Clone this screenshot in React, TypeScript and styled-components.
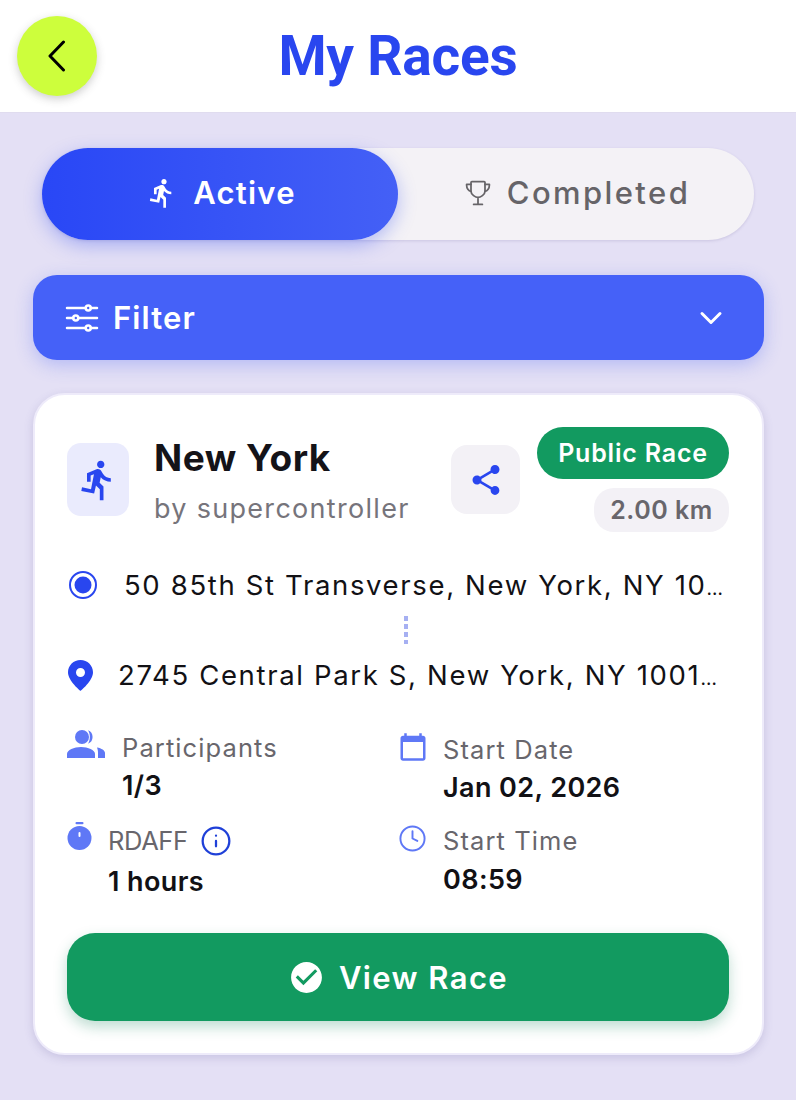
import React from "react";
import styled, { createGlobalStyle } from "styled-components";
import { MdDirectionsRun, MdShare, MdCalendarToday, MdCheckCircle } from "react-icons/md";
import { IoChevronDown, IoOptionsOutline, IoTrophyOutline } from "react-icons/io5";
import { Clock, Info } from "lucide-react";

const Global = createGlobalStyle`
  html, body { margin: 0; padding: 0; background: #e4e0f5; }
  body { font-family: "Inter", "Open Sans", sans-serif; width: 796px; height: 1100px; overflow: hidden; }
  * { box-sizing: border-box; }
`;

const Page = styled.div`
  width: 796px;
  height: 1100px;
  background: #e4e0f5;
  display: flex;
  flex-direction: column;
`;

const Header = styled.header`
  height: 113px;
  background: #fff;
  display: grid;
  grid-template-columns: 1fr auto 1fr;
  align-items: center;
  padding: 0 17px;
  border-bottom: 1px solid #e0dcef;
`;

const BackButton = styled.button`
  width: 80px;
  height: 80px;
  border: 0;
  border-radius: 50%;
  background: #cdfe3c;
  box-shadow: 0 3px 8px rgba(60, 60, 60, 0.25);
  display: flex;
  align-items: center;
  justify-content: center;
  color: #000;
  padding: 0;
  margin-top: -1px;
`;

const Title = styled.h1`
  margin: 0;
  font-family: "Roboto", sans-serif;
  font-weight: 700;
  font-size: 55px;
  line-height: 60px;
  color: #2946ef;
  letter-spacing: -0.2px;
`;

const Content = styled.main`
  padding: 35px 32px 0 33px;
  display: flex;
  flex-direction: column;
`;

const Toggle = styled.div`
  margin: 0 10px 0 9px;
  height: 92px;
  border-radius: 46px;
  background: #f4f2f6;
  box-shadow: 0 1px 3px rgba(90, 80, 140, 0.18);
  display: grid;
  grid-template-columns: 356px 1fr;
`;

const ToggleTab = styled.div<{ $active?: boolean }>`
  border-radius: 46px;
  display: flex;
  align-items: center;
  justify-content: center;
  gap: 15px;
  font-size: 31px;
  font-weight: ${(p) => (p.$active ? 600 : 500)};
  letter-spacing: ${(p) => (p.$active ? "1.2px" : "2.4px")};
  color: ${(p) => (p.$active ? "#fff" : "#666468")};
  background: ${(p) => (p.$active ? "linear-gradient(90deg, #2947f6, #4460f6)" : "transparent")};
  box-shadow: ${(p) => (p.$active ? "0 6px 18px rgba(60, 85, 240, 0.35)" : "none")};
  padding: 0 0 3px 2px;
`;

const FilterBar = styled.div`
  margin-top: 35px;
  height: 85px;
  border-radius: 24px;
  background: #4561f8;
  box-shadow: 0 5px 18px rgba(70, 95, 245, 0.3);
  display: flex;
  align-items: center;
  padding: 0 37px 0 29px;
  color: #fff;
  font-size: 31px;
  font-weight: 600;
  letter-spacing: 1.1px;
`;

const FilterLabel = styled.span`
  margin-left: 11px;
  flex: 1;
`;

const Card = styled.section`
  margin-top: 33px;
  height: 662px;
  background: #fff;
  border-radius: 32px;
  border: 2px solid #eeebfa;
  box-shadow: 0 3px 10px rgba(90, 80, 150, 0.2);
  padding: 32px 33px 0 32px;
  display: flex;
  flex-direction: column;
`;

const CardHead = styled.div`
  display: flex;
  align-items: flex-start;
`;

const SportIcon = styled.div`
  width: 62px;
  height: 73px;
  margin-top: 16px;
  border-radius: 14px;
  background: #eaebfd;
  color: #2946ef;
  font-size: 44px;
  display: flex;
  align-items: center;
  justify-content: center;
  flex: none;
`;

const Titles = styled.div`
  margin-left: 25px;
  flex: 1;
  padding-top: 7px;
`;

const RaceName = styled.div`
  font-size: 37px;
  line-height: 48px;
  font-weight: 700;
  color: #141318;
  letter-spacing: 0.5px;
`;

const RaceOwner = styled.div`
  margin-top: 10px;
  font-size: 27px;
  line-height: 34px;
  color: #76747b;
  letter-spacing: 1.3px;
  white-space: nowrap;
`;

const ShareButton = styled.div`
  width: 69px;
  height: 69px;
  margin-top: 18px;
  margin-right: 17px;
  border-radius: 16px;
  background: #f3f1f6;
  color: #2946ef;
  font-size: 36px;
  display: flex;
  align-items: center;
  justify-content: center;
  flex: none;
`;

const Badges = styled.div`
  display: flex;
  flex-direction: column;
  align-items: flex-end;
  gap: 9px;
  flex: none;
`;

const PublicBadge = styled.div`
  width: 192px;
  height: 52px;
  border-radius: 26px;
  background: #129a60;
  color: #fff;
  font-size: 25px;
  font-weight: 600;
  letter-spacing: 0.8px;
  display: flex;
  align-items: center;
  justify-content: center;
`;

const DistanceBadge = styled.div`
  width: 135px;
  height: 44px;
  border-radius: 20px;
  background: #f3f1f6;
  color: #68666c;
  font-size: 25px;
  font-weight: 600;
  letter-spacing: 0.5px;
  display: flex;
  align-items: center;
  justify-content: center;
`;

const AddressBlock = styled.div`
  margin-top: 33px;
  display: flex;
  flex-direction: column;
`;

const AddressRow = styled.div`
  display: flex;
  align-items: center;
  height: 40px;
  color: #2946ef;
`;

const AddressIconSlot = styled.div<{ $w: number; $pad: number }>`
  width: ${(p) => p.$w}px;
  padding-left: ${(p) => p.$pad}px;
  flex: none;
  display: flex;
  align-items: center;
  svg { display: block; }
`;

const AddressText = styled.div`
  font-size: 27.5px;
  line-height: 40px;
  color: #121115;
  letter-spacing: 1.65px;
  white-space: nowrap;
`;

const Ellipsis = styled.span`
  font-size: 19px;
  line-height: 0;
  letter-spacing: 0;
`;

const Dots = styled.div`
  height: 50px;
  display: flex;
  align-items: center;
  padding-left: 337px;
`;

const DotLine = styled.div`
  width: 4px;
  height: 28px;
  background: repeating-linear-gradient(to bottom, #a6b0f2 0 5px, transparent 5px 8px);
`;

const StatsGrid = styled.div`
  margin-top: 36px;
  display: grid;
  grid-template-columns: 333px 1fr;
  row-gap: 18px;
`;

const Stat = styled.div<{ $offset?: number }>`
  display: flex;
  align-items: flex-start;
  padding-top: ${(p) => p.$offset ?? 0}px;
`;

const StatIcon = styled.div<{ $w: number; $top: number; $left?: number }>`
  width: ${(p) => p.$w}px;
  flex: none;
  margin-top: ${(p) => p.$top}px;
  margin-left: ${(p) => p.$left ?? 0}px;
  color: #5f78f6;
  display: flex;
  svg { display: block; }
`;

const StatBody = styled.div<{ $gap: number }>`
  display: flex;
  flex-direction: column;
  gap: ${(p) => p.$gap}px;
`;

const StatLabelRow = styled.div`
  display: flex;
  align-items: center;
  gap: 12px;
  height: 34px;
`;

const StatLabel = styled.div<{ $tight?: boolean }>`
  font-size: 25.5px;
  line-height: 34px;
  color: #68666c;
  letter-spacing: ${(p) => (p.$tight ? "-0.4px" : "1.1px")};
`;

const StatValue = styled.div`
  font-size: 27px;
  line-height: 36px;
  font-weight: 600;
  color: #121115;
  letter-spacing: 0.4px;
`;

const InfoIcon = styled.span`
  color: #1f40d8;
  display: flex;
`;

const ViewButton = styled.button`
  margin-top: 33px;
  height: 88px;
  border: 0;
  border-radius: 28px;
  background: #129a60;
  box-shadow: 0 6px 14px rgba(20, 130, 90, 0.28);
  color: #fff;
  font-family: inherit;
  font-size: 31px;
  font-weight: 600;
  letter-spacing: 1.4px;
  display: flex;
  align-items: center;
  justify-content: center;
  gap: 14px;
`;

const ViewIcon = styled.span`
  font-size: 37px;
  display: flex;
`;

const ChevronLeft = () => (
  <svg width="20" height="32" viewBox="0 0 20 32" fill="none" stroke="currentColor" strokeWidth="3" strokeLinecap="round" strokeLinejoin="round">
    <path d="M16.5 2 L3 16 L16.5 30" />
  </svg>
);

const TargetIcon = () => (
  <svg width="28" height="28" viewBox="0 0 28 28">
    <circle cx="14" cy="14" r="13" fill="none" stroke="currentColor" strokeWidth="2" />
    <circle cx="14" cy="14" r="8.5" fill="currentColor" />
  </svg>
);

const PinIcon = () => (
  <svg width="25" height="31" viewBox="0 0 25 31">
    <path
      fill="currentColor"
      fillRule="evenodd"
      d="M12.5 0C5.6 0 0 5.5 0 12.3 0 21 12.5 31 12.5 31S25 21 25 12.3C25 5.5 19.4 0 12.5 0ZM12.5 8a4.5 4.5 0 1 1 0 9 4.5 4.5 0 0 1 0-9Z"
    />
  </svg>
);

const PeopleIcon = () => (
  <svg width="38" height="28" viewBox="0 0 38 28" fill="currentColor">
    <circle cx="15" cy="7" r="7" />
    <path d="M0 28v-4c0-4 7-7 14-7s14 3 14 7v4Z" />
    <path d="M21 .3A7.200 7.200 0 0 1 21 13.700C23.500 10 23.500 4 21 .3Z" />
    <path d="M30 17.500c4.500.8 8 3 8 5.500v5h-7v-5c0-2-.2-3.500-1-5.500Z" />
  </svg>
);

const TimerIcon = () => (
  <svg width="25" height="28" viewBox="0 0 25 28">
    <rect x="8.500" y="0" width="8" height="2.200" rx="1" fill="currentColor" />
    <circle cx="12.500" cy="16" r="12" fill="currentColor" />
    <rect x="11.500" y="10" width="2" height="5" rx="1" fill="#fff" />
  </svg>
);

export default function App() {
  return (
    <Page>
      <Global />
      <Header>
        <BackButton aria-label="Back"><ChevronLeft /></BackButton>
        <Title>My Races</Title>
        <span />
      </Header>
      <Content>
        <Toggle>
          <ToggleTab $active><MdDirectionsRun size={32} />Active</ToggleTab>
          <ToggleTab><IoTrophyOutline size={28} />Completed</ToggleTab>
        </Toggle>
        <FilterBar>
          <IoOptionsOutline size={40} />
          <FilterLabel>Filter</FilterLabel>
          <IoChevronDown size={32} />
        </FilterBar>
        <Card>
          <CardHead>
            <SportIcon><MdDirectionsRun /></SportIcon>
            <Titles>
              <RaceName>New York</RaceName>
              <RaceOwner>by supercontroller</RaceOwner>
            </Titles>
            <ShareButton><MdShare /></ShareButton>
            <Badges>
              <PublicBadge>Public Race</PublicBadge>
              <DistanceBadge>2.00 km</DistanceBadge>
            </Badges>
          </CardHead>
          <AddressBlock>
            <AddressRow>
              <AddressIconSlot $w={57} $pad={2}><TargetIcon /></AddressIconSlot>
              <AddressText>50 85th St Transverse, New York, NY 10<Ellipsis>…</Ellipsis></AddressText>
            </AddressRow>
            <Dots><DotLine /></Dots>
            <AddressRow>
              <AddressIconSlot $w={51} $pad={1}><PinIcon /></AddressIconSlot>
              <AddressText>2745 Central Park S, New York, NY 1001<Ellipsis>…</Ellipsis></AddressText>
            </AddressRow>
          </AddressBlock>
          <StatsGrid>
            <Stat>
              <StatIcon $w={55} $top={-1}><PeopleIcon /></StatIcon>
              <StatBody $gap={3}>
                <StatLabel>Participants</StatLabel>
                <StatValue>1/3</StatValue>
              </StatBody>
            </Stat>
            <Stat $offset={2}>
              <StatIcon $w={45} $top={-1} $left={-2}><MdCalendarToday size={30} /></StatIcon>
              <StatBody $gap={3}>
                <StatLabel>Start Date</StatLabel>
                <StatValue>Jan 02, 2026</StatValue>
              </StatBody>
            </Stat>
            <Stat>
              <StatIcon $w={41} $top={-2}><TimerIcon /></StatIcon>
              <StatBody $gap={6}>
                <StatLabelRow>
                  <StatLabel $tight>RDAFF</StatLabel>
                  <InfoIcon><Info size={32} strokeWidth={1.7} /></InfoIcon>
                </StatLabelRow>
                <StatValue>1 hours</StatValue>
              </StatBody>
            </Stat>
            <Stat>
              <StatIcon $w={45} $top={0} $left={-2}><Clock size={29} strokeWidth={1.6} /></StatIcon>
              <StatBody $gap={4}>
                <StatLabel>Start Time</StatLabel>
                <StatValue>08:59</StatValue>
              </StatBody>
            </Stat>
          </StatsGrid>
          <ViewButton><ViewIcon><MdCheckCircle /></ViewIcon>View Race</ViewButton>
        </Card>
      </Content>
    </Page>
  );
}
